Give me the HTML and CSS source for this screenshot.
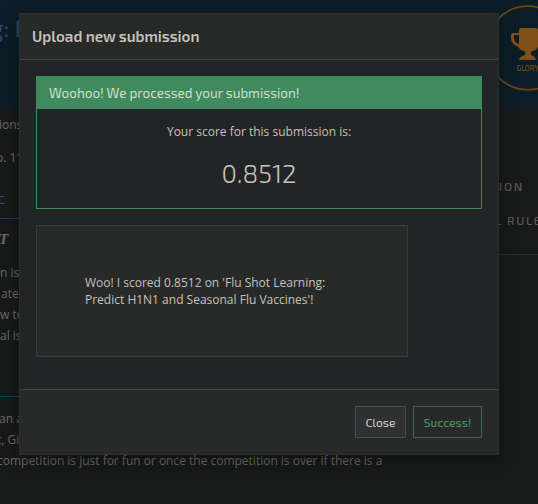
FILE: index.html
```html
<!DOCTYPE html>
<html lang="en">
<head>
<meta charset="utf-8">
<title>Upload new submission</title>
<link rel="stylesheet" href="styles.css">
</head>
<body>
<div class="page">
  <header class="hero">
    <h1 class="hero-title">g: F</h1>
    <svg class="badge" width="88" height="88" viewBox="0 0 88 88">
      <circle cx="44" cy="44" r="41.8" fill="none" stroke="#71430f" stroke-width="1.8"/>
      <path fill="#805019" fill-rule="evenodd" d="M35 26q0-2 2-2h15q2 0 2 2v3h6q2 0 2 2v3q0 6-8 9-2 4-6 4-1 0-1 4 4 1 5 5H35q1-4 6-5 1-4-1-4-4-1-6-4-7-3-7-9v-3q0-2 2-2h6zM35 31h-5v3q0 4 5 6zM54 31v9q5-2 5-6v-3z"/>
      <text class="badge-label" x="32.5" y="67.3" textLength="22" lengthAdjust="spacingAndGlyphs">GLORY</text>
    </svg>
  </header>
  <div class="columns">
    <main class="content">
      <p class="line">ions</p>
      <p class="line date">o. 11</p>
      <div class="tab">C</div>
      <h2 class="subhead">T</h2>
      <div class="copy"><p>n is</p><p class="in">ated</p><p>w to</p><p>al is</p></div>
      <div class="copy second"><p class="an">an a</p><p class="git">t, Gi</p><p class="long">competition is just for fun or once the competition is over if there is a</p></div>
    </main>
    <nav class="side"><span class="nav-a">ION</span><span class="nav-b">L RULES</span></nav>
  </div>
</div>
<section class="modal">
  <header class="modal-head">Upload new submission</header>
  <div class="modal-body">
    <div class="panel">
      <div class="panel-head">Woohoo! We processed your submission!</div>
      <div class="panel-body"><p>Your score for this submission is:</p><div class="score">0.8512</div></div>
    </div>
    <div class="share">Woo! I scored 0.8512 on 'Flu Shot Learning:<br>Predict H1N1 and Seasonal Flu Vaccines'!</div>
  </div>
  <footer class="modal-foot"><button class="btn close">Close</button><button class="btn success">Success!</button></footer>
</section>
</body>
</html>
```
FILE: styles.css
```css
* { box-sizing: border-box; }
body { margin: 0; background: #181a1a; color: #6c6863; font: 12px/21px "Open Sans", sans-serif; }
h1, h2, p { margin: 0; }
.page { width: 538px; height: 504px; overflow: hidden; white-space: nowrap; }
.hero { display: flex; justify-content: space-between; height: 109px; background: #0c1d27; }
.hero-title { margin: 10px 0 0 -10px; font: 24px/36px "Exo 2", "Open Sans", sans-serif; color: #294b67; }
.badge { flex: none; margin: 4px -34px 0 0; }
.badge-label { font: 500 7px "Exo 2", Roboto, sans-serif; fill: #805019; }
.columns { display: flex; justify-content: space-between; }
.content { width: 400px; }
.line { margin: 5px 0 0 -1px; }
.date { margin: 12px 0 0 -4px; }
.tab { height: 51px; padding-top: 21px; border-bottom: 1px solid #0b4261; text-indent: -2px; color: #1c5f86; font: 500 12px/21px "Exo 2", Roboto, sans-serif; }
.subhead { margin: 10px 0 0 -1px; font: italic bold 15px/20px "Liberation Serif", serif; }
.copy { height: 148px; padding-top: 13px; border-bottom: 1px solid #0b4261; }
.in { margin-left: 1px; }
.second { padding-top: 11px; border: 0; }
.an { margin-left: -1px; }
.git { margin-left: -3px; }
.long { margin-left: -3px; letter-spacing: -.01px; }
.side { display: flex; flex-direction: column; width: 60px; height: 146px; padding-top: 67px; border-bottom: 1px solid #2b2d2d; font: 500 12px/20px "Exo 2", Roboto, sans-serif; letter-spacing: 1.7px; color: #5d5852; }
.nav-a { margin-left: 21px; }
.nav-b { margin: 14px 0 0 17px; }
.modal { position: absolute; left: 19px; top: 13px; display: flex; flex-direction: column; width: 480px; height: 442px; border: 1px solid #2d2e2d; background: #232426; color: #c7c2bb; box-shadow: 0 5px 15px rgba(0,0,0,.35); }
.modal-head { height: 46px; padding: 12px 12px 0; background: #282a29; border-bottom: 1px solid #414345; font: 600 15.2px/20px "Exo 2", "Open Sans", sans-serif; white-space: nowrap; }
.modal-body { flex: 1; padding: 16px; }
.panel { width: 446px; height: 133px; border: 1px solid #3f8b5d; }
.panel-head { display: flex; align-items: center; height: 32px; padding: 0 12px; background: #3f8b5d; color: #d1ddcf; font: 13.5px/20px "Exo 2", "Open Sans", sans-serif; white-space: nowrap; }
.panel-body { padding-top: 12px; text-align: center; }
.score { margin-top: 14px; font: 300 25.8px/34px "Exo 2", "Open Sans", sans-serif; }
.share { width: 372px; height: 132px; margin-top: 16px; padding: 48px 48px; border: 1px solid #3a3b3e; background: #282a29; line-height: 17px; white-space: nowrap; }
.modal-foot { display: flex; justify-content: flex-end; gap: 7px; height: 65px; padding: 16px 16px 0; border-top: 1px solid #414345; background: #282a29; }
.btn { height: 32px; padding: 0; border: 1px solid #484c50; background: #2e3233; color: #c7c2bb; font: 500 12px/20px "Exo 2", "Open Sans", sans-serif; }
.close { width: 51px; }
.success { width: 69px; border-color: #34694b; background: #282a29; color: #4a8d66; }
```
